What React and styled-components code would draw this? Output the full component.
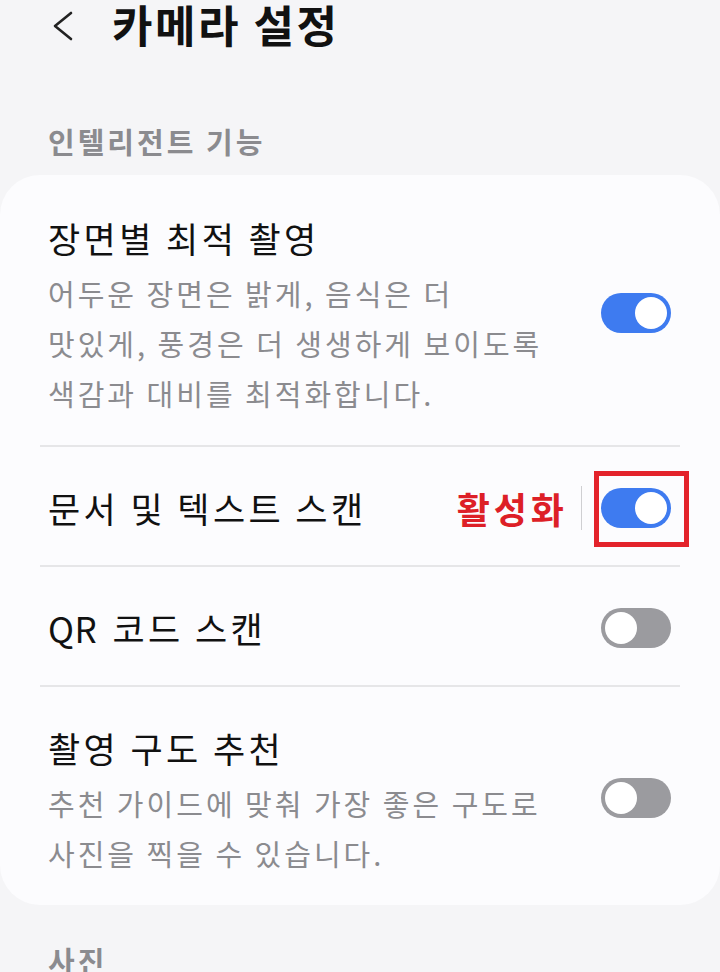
import React from 'react'
import styled, { createGlobalStyle } from 'styled-components'

const GlobalStyle = createGlobalStyle`
  html, body {
    margin: 0;
    padding: 0;
    background: #f5f5f7;
  }
  body {
    font-family: "Noto Sans CJK KR", "Noto Sans", sans-serif;
    -webkit-font-smoothing: antialiased;
  }
`

const Page = styled.div`
  width: 720px;
  min-height: 972px;
  background: #f5f5f7;
  overflow: hidden;
`

const Header = styled.div`
  display: flex;
  align-items: center;
  height: 48px;
  padding-left: 52px;
`

const BackButton = styled.span`
  display: flex;
  width: 22px;
  height: 30px;
  margin-top: 4px;
  margin-right: 38px;
`

const Title = styled.h1`
  margin: 0;
  font-size: 44px;
  line-height: 46px;
  font-weight: 700;
  color: #111;
  letter-spacing: 2.5px;
`

const SectionLabel = styled.div`
  padding: 0 48px;
  margin-top: ${p => p.$top}px;
  font-size: 29px;
  line-height: 40px;
  font-weight: 700;
  color: #8b8b8f;
  letter-spacing: 3px;
`

const Card = styled.div`
  margin-top: 14px;
  background: #fcfcfe;
  border-radius: 40px;
`

const Row = styled.div`
  display: flex;
  align-items: center;
  padding: 33px 49px 27px 48px;
  position: relative;

  & + &::before {
    content: '';
    position: absolute;
    top: 0;
    left: 40px;
    right: 40px;
    height: 2px;
    background: #e6e6e8;
  }
`

const Texts = styled.div`
  flex: 1;
  min-width: 0;
`

const ItemTitle = styled.div`
  font-size: 35px;
  line-height: 60px;
  color: #111;
  letter-spacing: 3.4px;
`

const Latin = styled.span`
  letter-spacing: 0.5px;
  margin-right: 4px;
`

const ItemDesc = styled.div`
  font-size: 29px;
  line-height: 50px;
  color: #8b8b8f;
  letter-spacing: 3px;
`

const Active = styled.span`
  font-size: 36px;
  font-weight: 700;
  color: #dd1f27;
  line-height: 60px;
  letter-spacing: 4px;
  margin-right: 13px;
`

const VBar = styled.span`
  width: 1px;
  height: 44px;
  background: #cfcfd2;
  margin-right: 19px;
`

const ToggleWrap = styled.span`
  position: relative;
  display: flex;
`

const Toggle = styled.span`
  position: relative;
  display: block;
  width: 70px;
  height: 40px;
  border-radius: 20px;
  background: ${p => (p.$on ? '#3e7bf0' : '#9b9b9f')};
  flex-shrink: 0;

  &::after {
    content: '';
    position: absolute;
    top: 4px;
    left: ${p => (p.$on ? '34px' : '4px')};
    width: 32px;
    height: 32px;
    border-radius: 50%;
    background: #fff;
  }
`

const Highlight = styled.span`
  position: absolute;
  top: -17px;
  bottom: -19px;
  left: -7px;
  right: -18px;
  border: 5px solid #e3232b;
  pointer-events: none;
`

const Chevron = () => (
  <svg width="22" height="30" viewBox="0 0 22 30">
    <polyline
      points="19,2 3,15 19,28"
      fill="none"
      stroke="#222"
      strokeWidth="2.6"
      strokeLinecap="round"
      strokeLinejoin="round"
    />
  </svg>
)

const App = () => {
  return (
    <Page>
      <GlobalStyle />
      <Header>
        <BackButton>
          <Chevron />
        </BackButton>
        <Title>카메라 설정</Title>
      </Header>

      <SectionLabel $top={73}>인텔리전트 기능</SectionLabel>

      <Card>
        <Row>
          <Texts>
            <ItemTitle>장면별 최적 촬영</ItemTitle>
            <ItemDesc>
              어두운 장면은 밝게, 음식은 더<br />
              맛있게, 풍경은 더 생생하게 보이도록<br />
              색감과 대비를 최적화합니다.
            </ItemDesc>
          </Texts>
          <Toggle $on />
        </Row>

        <Row>
          <Texts>
            <ItemTitle>문서 및 텍스트 스캔</ItemTitle>
          </Texts>
          <Active>활성화</Active>
          <VBar />
          <ToggleWrap>
            <Toggle $on />
            <Highlight />
          </ToggleWrap>
        </Row>

        <Row>
          <Texts>
            <ItemTitle><Latin>QR</Latin>{' '}코드 스캔</ItemTitle>
          </Texts>
          <Toggle />
        </Row>

        <Row>
          <Texts>
            <ItemTitle>촬영 구도 추천</ItemTitle>
            <ItemDesc>
              추천 가이드에 맞춰 가장 좋은 구도로<br />
              사진을 찍을 수 있습니다.
            </ItemDesc>
          </Texts>
          <Toggle />
        </Row>
      </Card>

      <SectionLabel $top={35}>사진</SectionLabel>
    </Page>
  )
}

export default App
